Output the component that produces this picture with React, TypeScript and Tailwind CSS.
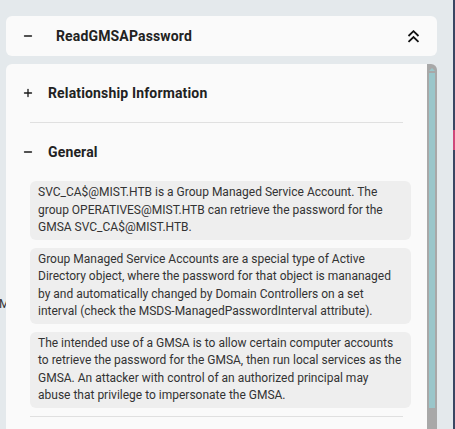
import { Minus, Plus } from 'lucide-react'

const GENERAL_TEXT = [
  'SVC_CA$@MIST.HTB is a Group Managed Service Account. The group OPERATIVES@MIST.HTB can retrieve the password for the GMSA SVC_CA$@MIST.HTB.',
  'Group Managed Service Accounts are a special type of Active Directory object, where the password for that object is mananaged by and automatically changed by Domain Controllers on a set interval (check the MSDS-ManagedPasswordInterval attribute).',
  'The intended use of a GMSA is to allow certain computer accounts to retrieve the password for the GMSA, then run local services as the GMSA. An attacker with control of an authorized principal may abuse that privilege to impersonate the GMSA.',
]

function DoubleChevronUp() {
  return (
    <svg width="13" height="13" viewBox="0 0 13 13" fill="none" stroke="#111" strokeWidth="1.8">
      <path d="M1.5 6 L6.5 1.2 L11.5 6" />
      <path d="M1.5 11.8 L6.5 7 L11.5 11.8" />
    </svg>
  )
}

function SectionRow({ open, title }: { open: boolean; title: string }) {
  return (
    <div className="flex items-center h-[42px] pl-4">
      <span className="w-[12px] flex justify-center text-[#1a1a1a]">
        {open ? <Minus size={14} strokeWidth={2.6} /> : <Plus size={14} strokeWidth={2.6} />}
      </span>
      <span className="ml-[14px] text-[14px] font-bold text-[#222] tracking-[0.15px]">{title}</span>
    </div>
  )
}

export default function App() {
  return (
    <div
      className="relative w-[455px] h-[429px] overflow-hidden bg-[#e4e9ec]"
      style={{ fontFamily: 'Roboto, "Noto Sans", sans-serif' }}
    >
      {/* bit of the page behind */}
      <span className="absolute left-0 top-[296px] w-[6px] overflow-hidden text-[12px] leading-[16px] text-[#333]">
        <span className="block -ml-[1px]">M</span>
      </span>
      <div className="absolute right-0 top-0 w-[2px] h-full bg-[#3b4763]" />
      <div className="absolute right-0 top-[130px] w-[2px] h-[20px] bg-[#d0487a]" />

      <div className="pt-4 pl-[6px] w-[437px] flex flex-col gap-2">
        {/* header */}
        <div className="h-[40px] rounded-md bg-[#fafafa] flex items-center pl-4 pr-[17px]">
          <span className="w-[12px] flex justify-center text-[#1a1a1a]">
            <Minus size={14} strokeWidth={2.6} />
          </span>
          <span className="ml-[22px] text-[14px] font-bold text-[#222] tracking-[0.15px] flex-1">ReadGMSAPassword</span>
          <DoubleChevronUp />
        </div>

        {/* panel */}
        <div className="flex h-[400px] rounded-t-md overflow-hidden">
          <div className="flex-1 bg-[#fafafa] pt-2">
            <SectionRow open={false} title="Relationship Information" />
            <div className="mt-2 ml-6 mr-6 h-px bg-[#e0e0e0]" />

            <div className="pt-2">
              <SectionRow open title="General" />
            </div>
            <div className="mt-2 ml-6 mr-4 flex flex-col gap-2">
              {GENERAL_TEXT.map((t, i) => (
                <p
                  key={i}
                  className="rounded-md bg-[#eeeeee] px-2 py-[3px] text-[12px] leading-[17.5px] text-[#333]"
                >
                  {t}
                </p>
              ))}
            </div>
            <div className="mt-[8px] ml-6 mr-6 h-px bg-[#e0e0e0]" />
          </div>

          {/* scrollbar */}
          <div className="w-[10px] bg-[#a8a8a8] flex flex-col items-center pt-[4px]">
            <div className="w-0 h-0 border-l-[3px] border-r-[3px] border-b-[3px] border-l-transparent border-r-transparent border-b-[#9ac6ca]" />
            <div className="mt-[2px] w-[6px] h-[335px] bg-[#9ac6ca]" />
          </div>
        </div>
      </div>
    </div>
  )
}
